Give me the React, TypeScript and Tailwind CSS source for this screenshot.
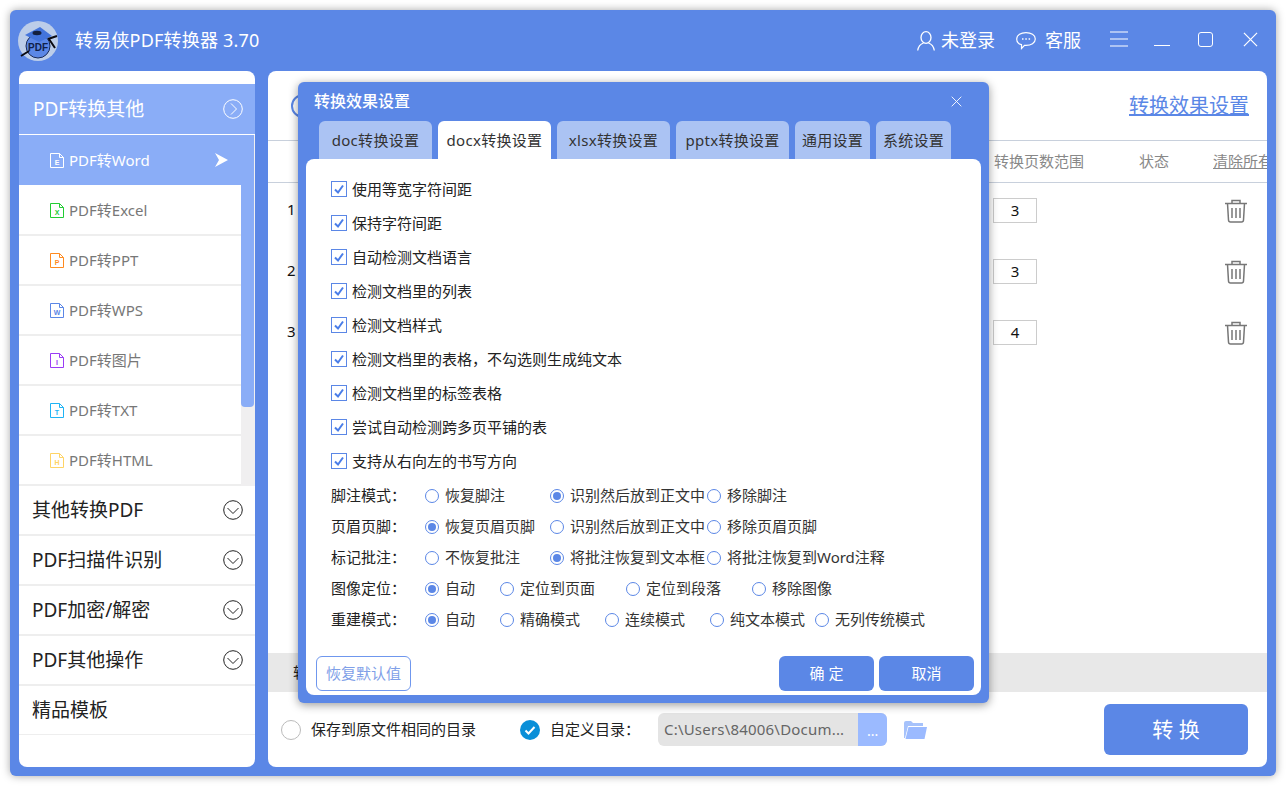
const fileItems = [
  { label: 'PDF转Word', letter: 'E', color: 'text-white', active: true },
  { label: 'PDF转Excel', letter: 'X', color: 'text-[#22cc33]' },
  { label: 'PDF转PPT', letter: 'P', color: 'text-[#ff8a1f]' },
  { label: 'PDF转WPS', letter: 'W', color: 'text-[#5b87e6]' },
  { label: 'PDF转图片', letter: 'I', color: 'text-[#9a3cf5]' },
  { label: 'PDF转TXT', letter: 'T', color: 'text-[#1fb4f5]' },
  { label: 'PDF转HTML', letter: 'H', color: 'text-[#ffd466]' },
];

const groups = ['其他转换PDF', 'PDF扫描件识别', 'PDF加密/解密', 'PDF其他操作'];

const tabs = [
  { label: 'doc转换设置', width: 'w-[113px]' },
  { label: 'docx转换设置', width: 'w-[113px]', active: true },
  { label: 'xlsx转换设置', width: 'w-[113px]' },
  { label: 'pptx转换设置', width: 'w-[113px]' },
  { label: '通用设置', width: 'w-[75px]' },
  { label: '系统设置', width: 'w-[75px]' },
];

const checks = [
  '使用等宽字符间距',
  '保持字符间距',
  '自动检测文档语言',
  '检测文档里的列表',
  '检测文档样式',
  '检测文档里的表格，不勾选则生成纯文本',
  '检测文档里的标签表格',
  '尝试自动检测跨多页平铺的表',
  '支持从右向左的书写方向',
];

const radioRows = [
  {
    label: '脚注模式：',
    options: [
      { text: '恢复脚注', width: 'w-[125px]' },
      { text: '识别然后放到正文中', width: 'w-[157px]', on: true },
      { text: '移除脚注', width: 'w-[120px]' },
    ],
  },
  {
    label: '页眉页脚：',
    options: [
      { text: '恢复页眉页脚', width: 'w-[125px]', on: true },
      { text: '识别然后放到正文中', width: 'w-[157px]' },
      { text: '移除页眉页脚', width: 'w-[120px]' },
    ],
  },
  {
    label: '标记批注：',
    options: [
      { text: '不恢复批注', width: 'w-[125px]' },
      { text: '将批注恢复到文本框', width: 'w-[157px]', on: true },
      { text: '将批注恢复到Word注释', width: 'w-[200px]' },
    ],
  },
  {
    label: '图像定位：',
    options: [
      { text: '自动', width: 'w-[75px]', on: true },
      { text: '定位到页面', width: 'w-[126px]' },
      { text: '定位到段落', width: 'w-[126px]' },
      { text: '移除图像', width: 'w-[100px]' },
    ],
  },
  {
    label: '重建模式：',
    options: [
      { text: '自动', width: 'w-[75px]', on: true },
      { text: '精确模式', width: 'w-[105px]' },
      { text: '连续模式', width: 'w-[105px]' },
      { text: '纯文本模式', width: 'w-[105px]' },
      { text: '无列传统模式', width: 'w-[120px]' },
    ],
  },
];

const pageCounts = ['3', '3', '4'];

function Logo() {
  return (
    <svg viewBox="0 0 40 40" className="w-10 h-10 shrink-0">
      <circle cx="20" cy="20" r="20" fill="#bccde9" />
      <circle cx="20" cy="25" r="12" fill="#5b87e6" stroke="#1a2a55" strokeWidth="1" />
      <path d="M7 14 L22 6 L34 15 L21 21 Z" fill="#4374dc" />
      <ellipse cx="19" cy="12" rx="4.500" ry="2.200" fill="#14203f" />
      <path d="M3 35 L11 30 M30 18 L39 15 M31 18 L37 27" stroke="#0b0b12" strokeWidth="2" fill="none" />
      <text x="20" y="30" textAnchor="middle" fontSize="10" fontWeight="700" fill="#10204a" fontFamily="Liberation Sans">PDF</text>
    </svg>
  );
}

function FileIcon({ letter, color }: { letter: string; color: string }) {
  return (
    <svg viewBox="0 0 14 15" className={`w-[14px] h-[15px] shrink-0 ${color}`}>
      <path d="M.5.5h9l4 4v10H.5z M9.500.5v4h4" fill="none" stroke="currentColor" />
      <text x="7" y="12" textAnchor="middle" fontSize="7" fontWeight="700" fill="currentColor" fontFamily="Liberation Sans">{letter}</text>
    </svg>
  );
}

function CloseIcon({ className }: { className: string }) {
  return (
    <svg viewBox="0 0 16 16" className={className} fill="none" stroke="currentColor" strokeWidth="1.300">
      <path d="M1 1 L15 15 M15 1 L1 15" />
    </svg>
  );
}

function CircleChevron({ dir, className }: { dir: 'right' | 'down'; className: string }) {
  return (
    <svg viewBox="0 0 20 20" className={`w-5 h-5 shrink-0 ${className}`} fill="none" stroke="currentColor" strokeWidth="1">
      <circle cx="10" cy="10" r="9.300" />
      <path d={dir === 'right' ? 'M8 4.500 L13.500 10 L8 15.500' : 'M4.500 8 L10 13.500 L15.500 8'} />
    </svg>
  );
}

function TrashIcon() {
  return (
    <svg viewBox="0 0 22 24" className="w-[22px] h-6 text-[#777]" fill="none" stroke="currentColor" strokeWidth="1.500">
      <path d="M0 4.500 H22 M7 4.500 V1.500 H15 V4.500" />
      <path d="M2.500 4.500 L3.500 21 Q3.600 23 5.500 23 H16.500 Q18.400 23 18.500 21 L19.500 4.500" />
      <path d="M7 9 V19 M11 9 V19 M15 9 V19" />
    </svg>
  );
}

function CheckBox({ label }: { label: string }) {
  return (
    <div className="flex items-center h-[34px] gap-[5px]">
      <span className="w-4 h-4 border border-[#5b87e6] flex items-center justify-center shrink-0">
        <svg viewBox="0 0 12 12" className="w-3 h-3">
          <path d="M2 6.500 L5 9.500 L10 2.500" fill="none" stroke="#4a7de8" strokeWidth="2" />
        </svg>
      </span>
      <span className="text-[15px] text-[#222]">{label}</span>
    </div>
  );
}

function Radio({ text, width, on }: { text: string; width: string; on?: boolean }) {
  return (
    <div className={`flex items-center gap-[6px] shrink-0 ${width}`}>
      <span className="w-[14px] h-[14px] rounded-full border border-[#5b87e6] flex items-center justify-center shrink-0">
        {on && <span className="w-2 h-2 rounded-full bg-[#5b87e6]" />}
      </span>
      <span className="text-[15px] text-[#333] whitespace-nowrap">{text}</span>
    </div>
  );
}

function SettingsDialog() {
  return (
    <div className="absolute left-[288px] top-[72px] w-[691px] h-[621px] bg-[#5b87e6] rounded-md shadow-[0_2px_10px_rgba(0,0,0,0.4)] flex flex-col px-2 pb-2">
      <div className="h-[39px] flex items-center justify-between pl-2 pr-[19px] text-white shrink-0">
        <span className="text-base font-medium mb-[2px]">转换效果设置</span>
        <CloseIcon className="w-[11px] h-[11px]" />
      </div>
      <div className="flex gap-[6px] pl-[13px] h-[38px] shrink-0">
        {tabs.map((t) => (
          <div
            key={t.label}
            className={`${t.width} rounded-t-md flex items-center justify-center text-[15px] tracking-[0.3px] text-[#333] whitespace-nowrap ${t.active ? 'bg-white' : 'bg-[#abc3f3]'}`}
          >
            {t.label}
          </div>
        ))}
      </div>
      <div className="flex-1 bg-white rounded-lg flex flex-col pl-[25px] pt-[13px] pr-[7px] pb-1">
        {checks.map((c) => (
          <CheckBox key={c} label={c} />
        ))}
        <div className="flex flex-col mt-[2px]">
          {radioRows.map((row) => (
            <div key={row.label} className="flex items-center h-[31px]">
              <span className="w-[94px] text-[15px] text-[#222] shrink-0">{row.label}</span>
              {row.options.map((o) => (
                <Radio key={o.text} {...o} />
              ))}
            </div>
          ))}
        </div>
        <div className="flex justify-between mt-auto -ml-[15px]">
          <button className="w-[95px] h-[35px] rounded-md border border-[#6f97ee] text-[15px] text-[#7f9fe8]">恢复默认值</button>
          <div className="flex gap-[5px]">
            <button className="w-[95px] h-[35px] rounded-md bg-[#5b87e6] text-[15px] text-white">确 定</button>
            <button className="w-[95px] h-[35px] rounded-md bg-[#5b87e6] text-[15px] text-white">取消</button>
          </div>
        </div>
      </div>
    </div>
  );
}

export default function App() {
  return (
    <div className="w-[1286px] h-[786px] bg-white p-[10px] font-['Noto_Sans','Noto_Sans_CJK_SC',sans-serif] overflow-hidden">
      <div className="relative w-[1266px] h-[766px] bg-[#5b87e6] rounded-md shadow-[0_0_8px_rgba(0,0,0,0.35)] flex flex-col">
        {/* Title bar */}
        <div className="h-[61px] flex items-center pl-2 pr-5 text-white shrink-0">
          <Logo />
          <span className="ml-[17px] text-lg tracking-[0.2px] mb-[2px]">转易侠PDF转换器 3.70</span>
          <div className="ml-auto flex items-center">
            <svg viewBox="0 0 18 20" className="w-[18px] h-5" fill="none" stroke="currentColor" strokeWidth="1.300">
              <ellipse cx="9" cy="6.500" rx="5" ry="5.800" />
              <path d="M.7 19.500 C1.500 14.500 5 12.500 6.500 12 M17.300 19.500 C16.500 14.500 13 12.500 11.500 12" />
            </svg>
            <span className="ml-[6px] text-lg mb-[2px]">未登录</span>
            <svg viewBox="0 0 20 18" className="w-5 h-[18px] ml-[21px]" fill="none" stroke="currentColor" strokeWidth="1.200">
              <path d="M10 .7 C15 .7 19.300 3 19.300 7 C19.300 11 15 13.300 10 13.300 H8.500 L5.500 16.500 V12.700 C2.500 12 .7 10 .7 7 C.7 3 5 .7 10 .7 Z" />
              <path d="M6 7h1.500M9.300 7h1.500M12.600 7h1.500" strokeWidth="1.500" />
            </svg>
            <span className="ml-[9px] text-lg mb-[2px]">客服</span>
            <svg viewBox="0 0 18 16" className="w-[18px] h-4 ml-[29px] mb-[4px]" stroke="currentColor" strokeWidth="1.200">
              <path d="M0 1h18M0 8h18M0 15h18" />
            </svg>
            <span className="w-4 h-px bg-white ml-[26px] mt-[10px]" />
            <span className="w-[15px] h-[15px] border border-white rounded-[3px] ml-7 mb-[2px]" />
            <CloseIcon className="w-[15px] h-[15px] ml-[30px] -mr-[2px] mb-[2px]" />
          </div>
        </div>

        <div className="flex-1 flex gap-[13px] px-[9px] pb-[9px] min-h-0">
          {/* Sidebar */}
          <div className="w-[236px] bg-white rounded-lg flex flex-col pt-[13px] shrink-0 overflow-hidden">
            <div className="h-[50px] bg-[#8aadf7] flex items-center justify-between pl-[14px] pr-[12px] text-white shrink-0">
              <span className="text-[19px]">PDF转换其他</span>
              <CircleChevron dir="right" className="text-white" />
            </div>
            <div className="h-[352px] flex pt-px shrink-0">
              <div className="w-[222px] flex flex-col">
                {fileItems.map((f) => (
                  <div
                    key={f.label}
                    className={
                      f.active
                        ? 'h-[51px] shrink-0 flex items-center pl-[31px] pr-[13px] gap-[5px] bg-[#8aadf7] text-white border-b border-white'
                        : 'h-[50px] shrink-0 flex items-center pl-[31px] pr-[13px] gap-[5px] border-b-2 border-[#eeeeee] text-[#777]'
                    }
                  >
                    <FileIcon letter={f.letter} color={f.color} />
                    <span className="text-[15px]">{f.label}</span>
                    {f.active && (
                      <svg viewBox="0 0 13 14" className="w-[13px] h-[14px] ml-auto">
                        <path d="M0 0 L13 7 L0 14 L4 7 Z" fill="#fff" />
                      </svg>
                    )}
                  </div>
                ))}
              </div>
              <div className="flex-1 bg-[#f0eff0]">
                <div className="h-[272px] w-[13px] bg-[#8aadf7] rounded-b-sm" />
              </div>
            </div>
            {groups.map((g) => (
              <div key={g} className="h-[50px] shrink-0 flex items-center justify-between pl-[13px] pr-3 border-b-2 border-[#eeeeee] text-[#222]">
                <span className="text-[19px]">{g}</span>
                <CircleChevron dir="down" className="text-[#222]" />
              </div>
            ))}
            <div className="h-[49px] shrink-0 flex items-center pl-[13px] border-b border-[#eeeeee] text-[19px] text-[#222]">
              精品模板
            </div>
          </div>

          {/* Main panel */}
          <div className="flex-1 bg-white rounded-lg flex flex-col overflow-hidden min-w-0">
            <div className="h-[69px] flex items-center justify-between pl-[23px] pr-[18px] shrink-0">
              <span className="w-6 h-6 rounded-full border-2 border-[#5b87e6]" />
              <span className="text-[20px] text-[#5b87e6] underline">转换效果设置</span>
            </div>
            <div className="h-[43px] shrink-0 border-y border-[#c8d0dc] flex items-center text-[15px] text-[#888] pl-[726px] whitespace-nowrap">
              <span className="w-[145px] shrink-0">转换页数范围</span>
              <span className="w-[74px] shrink-0">状态</span>
              <span className="underline shrink-0">清除所有</span>
            </div>
            <div className="flex-1 flex flex-col pt-[15px]">
              {pageCounts.map((n, i) => (
                <div key={i} className="h-[61px] flex items-start shrink-0">
                  <span className="w-[725px] pl-[19px] text-[15px] text-[#111]">{i + 1}</span>
                  <span className="w-11 h-[25px] border border-[#ccc] flex items-center justify-center text-[15px] text-[#111]">{n}</span>
                  <span className="ml-[188px] mt-[1px]"><TrashIcon /></span>
                </div>
              ))}
            </div>
            <div className="h-[39px] bg-[#e8e8e8] flex items-center pl-[25px] text-[15px] text-[#222] shrink-0">转</div>
            <div className="h-[75px] flex items-center pl-[13px] pr-[19px] shrink-0">
              <span className="w-5 h-5 rounded-full border border-[#bbb]" />
              <span className="ml-[10px] text-[15px] text-[#222]">保存到原文件相同的目录</span>
              <span className="ml-[44px] w-5 h-5 rounded-full bg-[#0a8fd8] flex items-center justify-center">
                <svg viewBox="0 0 12 12" className="w-3 h-3">
                  <path d="M1.500 6.500 L4.500 9.500 L10.500 3" fill="none" stroke="#fff" strokeWidth="2" />
                </svg>
              </span>
              <span className="ml-[10px] w-[108px] text-[15px] text-[#222]">自定义目录：</span>
              <div className="w-[229px] h-[33px] rounded-md bg-[#e4e4e4] flex overflow-hidden">
                <span className="w-[200px] pl-[6px] text-[15px] tracking-[0.2px] text-[#666] leading-[33px] whitespace-nowrap overflow-hidden">C:\Users\84006\Docum...</span>
                <span className="w-[29px] bg-[#9bbaff] text-white text-sm text-center leading-[35px]">...</span>
              </div>
              <svg viewBox="0 0 24 20" className="w-6 h-5 ml-4">
                <path d="M1 3 Q1 1 3 1 H8 L10 3 H20 V6 H5 L2 18 H1 Z" fill="#a6c2fb" />
                <path d="M5.500 7 H24 L21.500 19 H2.500 Z" fill="#9bbaff" />
              </svg>
              <button className="ml-auto w-36 h-[51px] rounded-md bg-[#5b87e6] text-white text-[21px]">转 换</button>
            </div>
          </div>
        </div>

        <SettingsDialog />
      </div>
    </div>
  );
}
